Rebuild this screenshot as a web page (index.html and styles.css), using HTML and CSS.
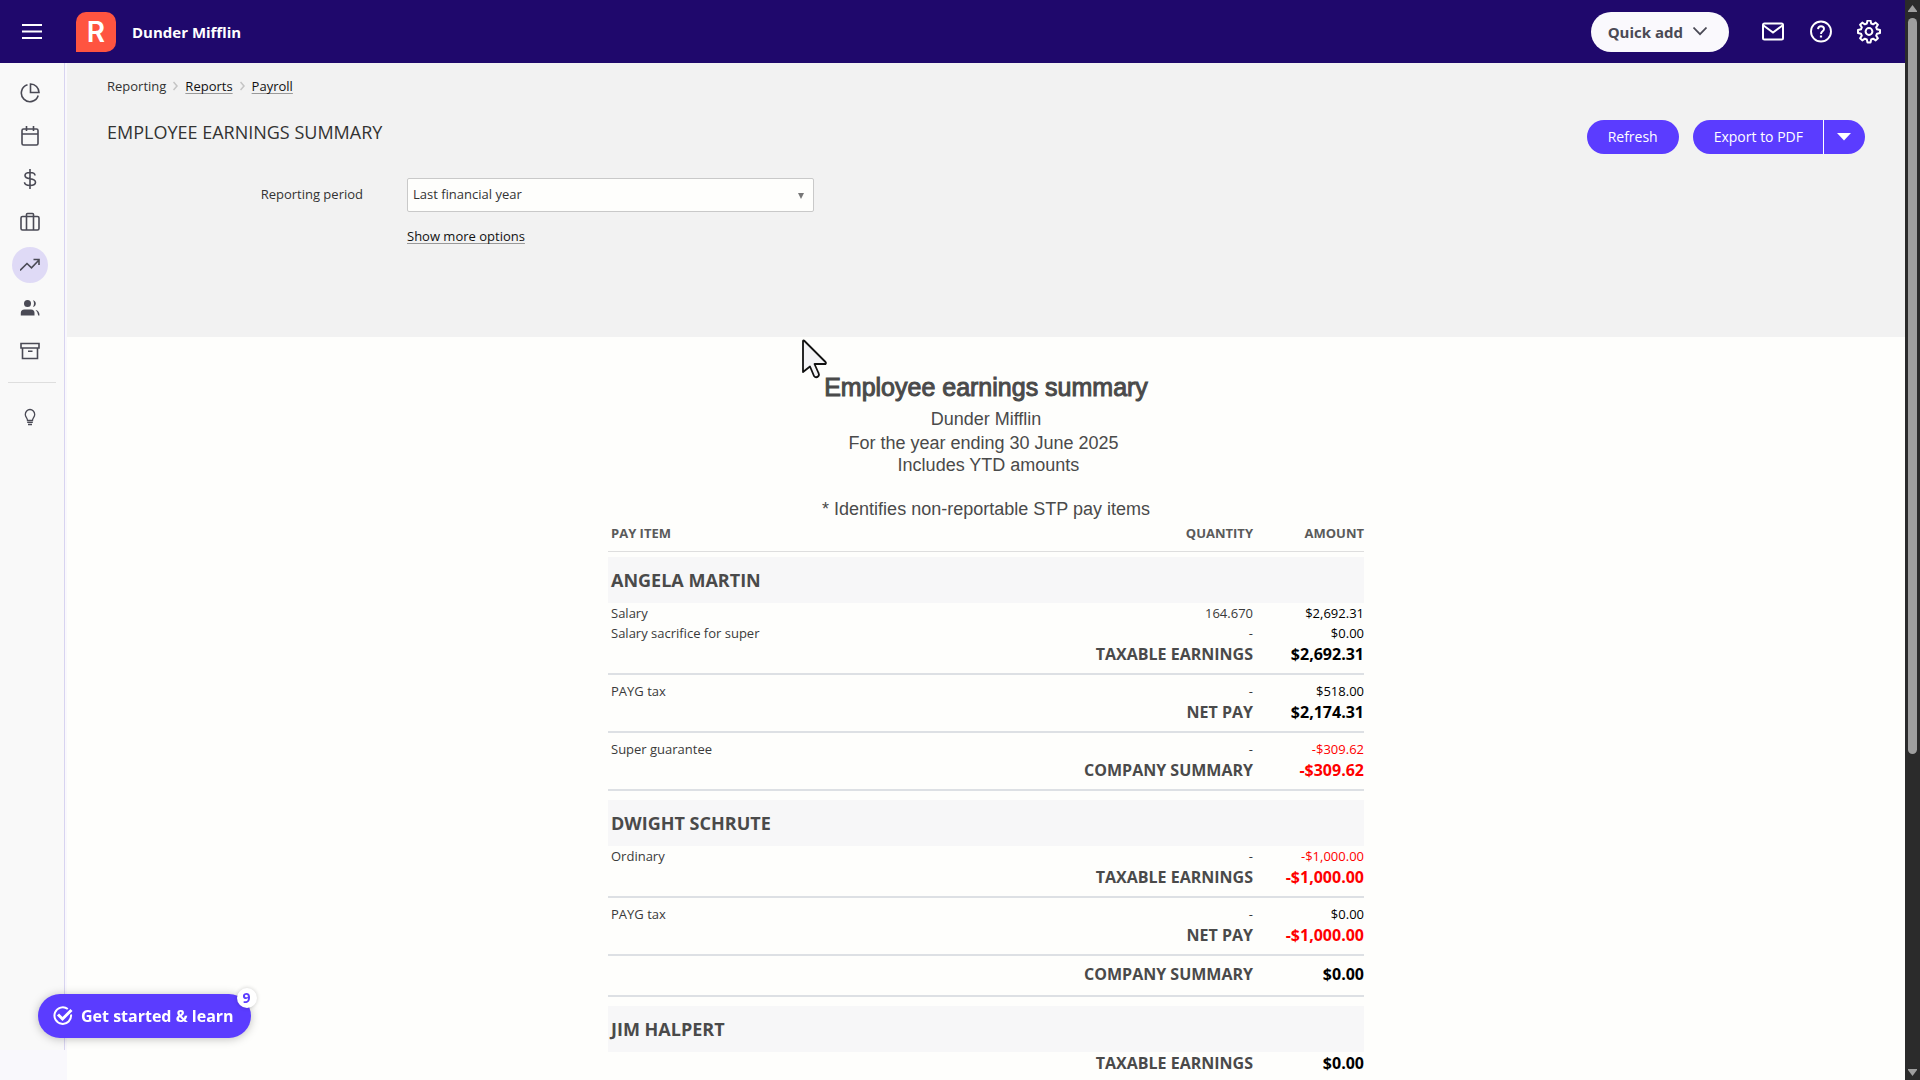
FILE: index.html
```html
<!DOCTYPE html>
<html lang="en">
<head>
<meta charset="UTF-8" />
<meta name="viewport" content="width=device-width, initial-scale=1" />
<title>Employee earnings summary</title>
<link rel="stylesheet" href="styles.css">
</head>
<body>
<div class="app">
  <header class="topbar">
    <button class="icon-btn menu-btn" aria-label="Menu">
      <svg width="20" height="16" viewBox="0 0 20 16"><path d="M0 1h20M0 7.500h20M0 14h20" stroke="#fff" stroke-width="2"/></svg>
    </button>
    <a href="#" class="logo">R</a>
    <span class="company">Dunder Mifflin</span>
    <button class="quick-add">Quick add
      <svg width="14" height="9" viewBox="0 0 14 9"><path d="M.5.5L7 7.200 13.500.5" fill="none" stroke="#4a4a55" stroke-width="1.700"/></svg>
    </button>
    <button class="icon-btn" aria-label="Messages">
      <svg width="24" height="24" viewBox="0 0 24 24" fill="none" stroke="#fff" stroke-width="2"><rect x="2" y="3.500" width="20" height="16" rx="1.500"/><path d="M2.500 5.500L12 12.500l9.500-7"/></svg>
    </button>
    <button class="icon-btn" aria-label="Help">
      <svg width="24" height="24" viewBox="0 0 24 24" fill="none" stroke="#fff" stroke-width="1.900"><circle cx="12" cy="11.500" r="10"/><path d="M9 9.100C9.200 7.200 10.400 6.300 12 6.300c1.700 0 3 1 3 2.600 0 2.400-3 2.400-3 5"/><path d="M12 15.500v2" stroke-width="2.200"/></svg>
    </button>
    <button class="icon-btn" aria-label="Settings">
      <svg width="24" height="24" viewBox="0 0.500 24 24" fill="none" stroke="#fff" stroke-width="2" stroke-linejoin="round"><circle cx="12" cy="12" r="3.400"/><path d="M10.500 1h3l.7 3 1.900.8 2.600-1.700 2.200 2.200-1.700 2.600.8 1.900 3 .7v3l-3 .7-.8 1.900 1.700 2.600-2.200 2.200-2.600-1.700-1.900.8-.7 3h-3l-.7-3-1.900-.8-2.600 1.700-2.200-2.200 1.700-2.600-.8-1.900-3-.7v-3l3-.7.8-1.900-1.700-2.600 2.200-2.200 2.600 1.700 1.900-.8z"/></svg>
    </button>
  </header>

  <div class="body">
    <nav class="sidebar">
      <div class="sidebar-inner">
        <a href="#" aria-label="Dashboard"><svg viewBox="0 0 20 20"><path d="M7.500 1.800A8.600 8.600 0 1 0 18.200 12.500"/><path d="M10.500 1v8.500H19A8.500 8.500 0 0 0 10.500 1z"/></svg></a>
        <a href="#" aria-label="Calendar"><svg viewBox="0 0 20 20"><rect x="2" y="3" width="16" height="16" rx="1.500"/><path d="M2 8h16M6.500 0v5M13.500 0v5"/></svg></a>
        <a href="#" aria-label="Money"><svg viewBox="0 0 20 20"><path d="M10 0v20M15 6.500C15 4.500 13.500 3.500 10 3.500S5 4.500 5 6.500 6.500 9.300 10 9.800s5.500 1.200 5.500 3.500-2 3.200-5.500 3.200-5.500-1.200-5.500-3.200"/></svg></a>
        <a href="#" aria-label="Business"><svg viewBox="0 0 20 20"><rect x="1" y="4.500" width="18" height="13.500" rx="1.500"/><path d="M6.500 18V2.500q0-1 1-1h5q1 0 1 1V18"/></svg></a>
        <a href="#" class="active" aria-label="Reporting"><svg viewBox="0 0 20 20"><path d="M0 15.500L7 8.500l4.500 4.300L19 5M13.500 4.500H19V10"/></svg></a>
        <a href="#" aria-label="Contacts"><svg viewBox="0 0 20 20"><g fill="#4a4a55" stroke="none"><circle cx="7.500" cy="5.500" r="3.500"/><path d="M.8 17.500V15Q.8 11.500 4.500 11.500H11Q14.500 11.500 14.500 15v2.500zM13 2.200q2.800.6 2.800 3.400T13 9q1-1.400 1-3.400T13 2.200zM15.500 12q4 .5 4 5.500h-1.300q0-3.500-2.700-5.500z"/></g></svg></a>
        <a href="#" aria-label="Archive"><svg viewBox="0 0 20 20"><path d="M1 2.500h18V7H1zM2.500 7v10.500h15V7M8 10.200h4.500"/></svg></a>
        <hr>
        <a href="#" aria-label="Tips"><svg viewBox="0 0 20 20"><path d="M7.500 13.500c0-2.500-2.200-3.200-2.200-6a4.700 5 0 0 1 9.400 0c0 2.800-2.200 3.500-2.200 6zM7.200 15.300h5.600M8 17.500h4" stroke-width="1.300"/></svg></a>
      </div>
    </nav>

    <main>
      <section class="controls">
        <div class="breadcrumb">
          <span>Reporting</span>
          <svg width="5" height="10" viewBox="0 0 5 10"><path d="M.5 1l3.500 4L.5 9"/></svg>
          <a href="#">Reports</a>
          <svg width="5" height="10" viewBox="0 0 5 10"><path d="M.5 1l3.500 4L.5 9"/></svg>
          <a href="#">Payroll</a>
        </div>
        <div class="title-row">
          <h1>EMPLOYEE EARNINGS SUMMARY</h1>
          <button class="btn">Refresh</button>
          <div class="split">
            <button class="btn">Export to PDF</button>
            <button class="btn caret" aria-label="More export options"><svg width="14" height="8" viewBox="0 0 14 8"><path d="M0 0h14L7 7.500z" fill="#fff"/></svg></button>
          </div>
        </div>
        <div class="filter">
          <label for="period">Reporting period</label>
          <div class="field">
            <div class="select-wrap">
              <select id="period">
                <option>Last financial year</option>
                <option>This financial year</option>
              </select>
              <svg width="6" height="6" viewBox="0 0 6 6"><path d="M0 0h6L3 6z" fill="#777"/></svg>
            </div>
            <a href="#">Show more options</a>
          </div>
        </div>
      </section>

      <section class="report">
        <h2>Employee earnings summary</h2>
        <p class="for">Dunder Mifflin</p>
        <p>For the year ending 30 June 2025&nbsp;</p>
        <p>&nbsp;Includes YTD amounts</p>
        <p class="note">* Identifies non-reportable STP pay items</p>
        <table>
          <thead>
            <tr><th>PAY ITEM</th><th>QUANTITY</th><th>AMOUNT</th></tr>
          </thead>
          <tbody class="employee">
            <tr><th colspan="3">ANGELA MARTIN</th></tr>
          </tbody>
          <tbody class="group">
            <tr><td>Salary</td><td>164.670</td><td>$2,692.31</td></tr>
            <tr><td>Salary sacrifice for super</td><td>-</td><td>$0.00</td></tr>
            <tr class="total"><td colspan="2">TAXABLE EARNINGS</td><td>$2,692.31</td></tr>
          </tbody>
          <tbody class="group">
            <tr><td>PAYG tax</td><td>-</td><td>$518.00</td></tr>
            <tr class="total"><td colspan="2">NET PAY</td><td>$2,174.31</td></tr>
          </tbody>
          <tbody class="group">
            <tr><td>Super guarantee</td><td>-</td><td class="neg">-$309.62</td></tr>
            <tr class="total"><td colspan="2">COMPANY SUMMARY</td><td class="neg">-$309.62</td></tr>
          </tbody>
          <tbody class="employee">
            <tr><th colspan="3">DWIGHT SCHRUTE</th></tr>
          </tbody>
          <tbody class="group">
            <tr><td>Ordinary</td><td>-</td><td class="neg">-$1,000.00</td></tr>
            <tr class="total"><td colspan="2">TAXABLE EARNINGS</td><td class="neg">-$1,000.00</td></tr>
          </tbody>
          <tbody class="group">
            <tr><td>PAYG tax</td><td>-</td><td>$0.00</td></tr>
            <tr class="total"><td colspan="2">NET PAY</td><td class="neg">-$1,000.00</td></tr>
          </tbody>
          <tbody class="group">
            <tr class="total lone"><td colspan="2">COMPANY SUMMARY</td><td>$0.00</td></tr>
          </tbody>
          <tbody class="employee">
            <tr><th colspan="3">JIM HALPERT</th></tr>
          </tbody>
          <tbody class="group">
            <tr class="total"><td colspan="2">TAXABLE EARNINGS</td><td>$0.00</td></tr>
          </tbody>
        </table>
      </section>
    </main>
  </div>
</div>

<div class="scrollbar">
  <svg width="9" height="7" viewBox="0 0 9 7"><path d="M4.500 0L9 6v1H0V6z"/></svg>
  <div class="track"><div class="thumb"></div></div>
  <svg width="9" height="7" viewBox="0 0 9 7"><path d="M0 0h9v1L4.500 7 0 1z"/></svg>
</div>

<button class="launcher">
  <svg width="20" height="20" viewBox="0 0 20 20" fill="none" stroke="#fff" stroke-width="2"><path d="M14.800 3A8.300 8.300 0 1 0 18 8.500"/><path d="M5 8.500l4.500 4.500L18.500 4" stroke-width="3"/></svg>
  Get started &amp; learn
  <span class="badge">9</span>
</button>

<svg class="cursor" width="28" height="40" viewBox="0 0 28 40"><path d="M2 2v31l7-5.500 4 9.500q2 2.500 4.500 0 1-1 0-3L13.500 25H24.500Q25.500 24 24.500 23L3.500 2Q2.500 1 2 2z" fill="#f4f4f6" stroke="#111" stroke-width="1.800" stroke-linejoin="round"/></svg>
</body>
</html>
```
FILE: styles.css
```css
* {
  box-sizing: border-box;
}
body {
  margin: 0;
  height: 100vh;
  display: flex;
  overflow: hidden;
  background: #fefefc;
  color: #333;
  font-family: 'Open Sans', 'Noto Sans', sans-serif;
  font-size: 13px;
}
button {
  border: none;
  font-family: inherit;
  cursor: pointer;
}
svg {
  display: block;
}
.app {
  flex: 1;
  min-width: 0;
  display: flex;
  flex-direction: column;
}

/* top bar */
.topbar {
  height: 63px;
  flex: none;
  display: flex;
  align-items: center;
  padding: 0 24px 0 22px;
  background: #1f086c;
}
.icon-btn {
  background: none;
  padding: 0;
  margin-left: 24px;
}
.menu-btn {
  margin-left: 0;
}
.logo {
  width: 40px;
  height: 40px;
  margin-left: 34px;
  border-radius: 10px 10px 10px 0;
  background: #ff5440;
  color: #fff;
  font: 600 28px/40px Inter, sans-serif;
  text-align: center;
  text-decoration: none;
}
.company {
  margin-left: 16px;
  color: #fff;
  font-size: 15px;
  font-weight: 700;
}
.quick-add {
  display: flex;
  align-items: center;
  gap: 10px;
  height: 40px;
  margin-left: auto;
  margin-right: 8px;
  padding: 0 22px 0 17px;
  border-radius: 20px;
  background: #faf9fd;
  color: #4a4a55;
  font-size: 15px;
  font-weight: 700;
}

/* side navigation */
.body {
  flex: 1;
  min-height: 0;
  display: flex;
}
.sidebar {
  width: 67px;
  flex: none;
  padding-bottom: 30px;
  background: #f9f8fc;
}
.sidebar-inner {
  width: 65px;
  height: 100%;
  display: flex;
  flex-direction: column;
  gap: 7px;
  padding: 12px;
  border-right: 1px solid #d8d4f0;
  background: #f9f9f9;
}
.sidebar-inner a {
  width: 36px;
  height: 36px;
  display: flex;
  align-items: center;
  justify-content: center;
  border-radius: 18px;
}
.sidebar-inner a.active {
  background: #dfdaf6;
}
.sidebar-inner svg {
  width: 20px;
  height: 20px;
  fill: none;
  stroke: #4a4a55;
  stroke-width: 1.6;
}
.sidebar-inner hr {
  width: 48px;
  margin: 6px -4px 9px;
  border: none;
  border-top: 1px solid #dedede;
}

/* page controls */
main {
  flex: 1;
  min-width: 0;
}
main a {
  color: #111;
  text-decoration: underline #999 1px;
  text-underline-offset: 2px;
  text-decoration-skip-ink: none;
}
.controls {
  height: 274px;
  padding: 14px 40px 0;
  background: #f2f2f2;
}
.breadcrumb {
  display: flex;
  align-items: center;
  gap: 7px;
  line-height: 18px;
}
.breadcrumb svg {
  fill: none;
  stroke: #c4c4c4;
  stroke-width: 1.5;
}
.title-row {
  display: flex;
  margin-top: 25px;
}
h1 {
  flex: 1;
  margin: 0;
  font-size: 18px;
  font-weight: 400;
  line-height: 24px;
}
.btn {
  height: 34px;
  padding: 0 21px 1px;
  border-radius: 17px;
  background: #5b3cff;
  color: #fff;
  font-size: 14px;
}
.split {
  display: flex;
  margin-left: 14px;
  border-radius: 17px;
  background: #5b3cff;
}
.split .btn {
  padding-right: 20px;
  background: none;
}
.split .caret {
  padding: 0 14px 0 13px;
  border-left: 1px solid #fff;
  border-radius: 0;
}
.filter {
  display: flex;
  margin-top: 24px;
}
.filter label {
  width: 256px;
  text-align: right;
  line-height: 32px;
}
.field {
  width: 407px;
  margin-left: 44px;
}
.select-wrap {
  position: relative;
  margin-bottom: 15px;
}
.select-wrap svg {
  position: absolute;
  right: 10px;
  top: 15px;
  pointer-events: none;
}
select {
  width: 100%;
  height: 34px;
  padding: 0 5px 2px;
  border: 1px solid #c9c9c9;
  border-radius: 2px;
  background: #fefefc;
  color: #333;
  font-family: inherit;
  font-size: 13px;
  appearance: none;
}

/* report */
.report {
  max-width: 756px;
  margin: 0 auto;
  padding-top: 34px;
  color: #4a4a4a;
  font-family: 'Liberation Sans', Arial, sans-serif;
  font-size: 18px;
  text-align: center;
}
.report h2 {
  margin: 0;
  font-size: 25px;
  font-weight: 400;
  line-height: 32px;
  -webkit-text-stroke: 1px #4a4a4a;
}
.report p {
  margin: 0;
  line-height: 22px;
}
.report .for {
  margin: 5px 0 2px;
}
.report .note {
  margin: 22px 0 3px;
}
table {
  width: 100%;
  table-layout: fixed;
  border-spacing: 0;
  font-family: 'Open Sans', 'Noto Sans', sans-serif;
  font-size: 13px;
  line-height: 20px;
}
th, td {
  padding: 0;
  text-align: right;
}
td {
  color: #3a3a3a;
}
th:first-child, td:first-child {
  padding-left: 3px;
  text-align: left;
}
th:nth-child(2), th:nth-child(3) {
  width: 111px;
}
thead th {
  padding-bottom: 8px;
  border-bottom: 1px solid #dedede;
  color: #5a5a5a;
}
.employee th {
  border-top: 9px solid #fefefc;
  background: #f7f7f8;
  font-size: 18px;
  line-height: 46px;
}
thead + .employee th {
  border-top-width: 5px;
}
td:last-child {
  color: #000;
}
.group + .group tr:first-child td {
  padding-top: 6px;
}
.total td {
  padding-bottom: 8px;
  border-bottom: 2px solid #dde0e4;
  font-size: 16px;
  font-weight: 700;
  line-height: 22px;
}
.total td:first-child {
  color: #4a4a4a;
  text-align: right;
}
.lone td {
  line-height: 24px;
  padding-bottom: 9px;
}
td.neg:last-child {
  color: #f00;
}

/* scrollbar */
.scrollbar {
  width: 15px;
  flex: none;
  display: flex;
  flex-direction: column;
  align-items: center;
  gap: 6px;
  padding: 5px 0 4px;
  background: #2b2b2b;
}
.scrollbar svg {
  flex: none;
  fill: #9f9f9f;
}
.track {
  flex: 1;
}
.thumb {
  width: 9px;
  height: calc(70% + 4px);
  border-radius: 5px;
  background: #9f9f9f;
}

/* floating items */
.launcher {
  position: fixed;
  left: 38px;
  bottom: 42px;
  height: 44px;
  display: flex;
  align-items: center;
  gap: 8px;
  padding: 0 17px 0 15px;
  border-radius: 22px;
  background: #5b3cff;
  box-shadow: 0 1px 10px rgba(0, 0, 0, 0.25);
  color: #fff;
  font-size: 16px;
  font-weight: 700;
}
.badge {
  position: absolute;
  right: -6px;
  top: -6px;
  width: 20px;
  height: 20px;
  border-radius: 10px;
  background: #fff;
  box-shadow: 0 0 4px rgba(0, 0, 0, 0.2);
  color: #5b3cff;
  font-size: 14px;
  line-height: 20px;
}
.cursor {
  position: fixed;
  left: 801px;
  top: 339px;
  pointer-events: none;
}
```
